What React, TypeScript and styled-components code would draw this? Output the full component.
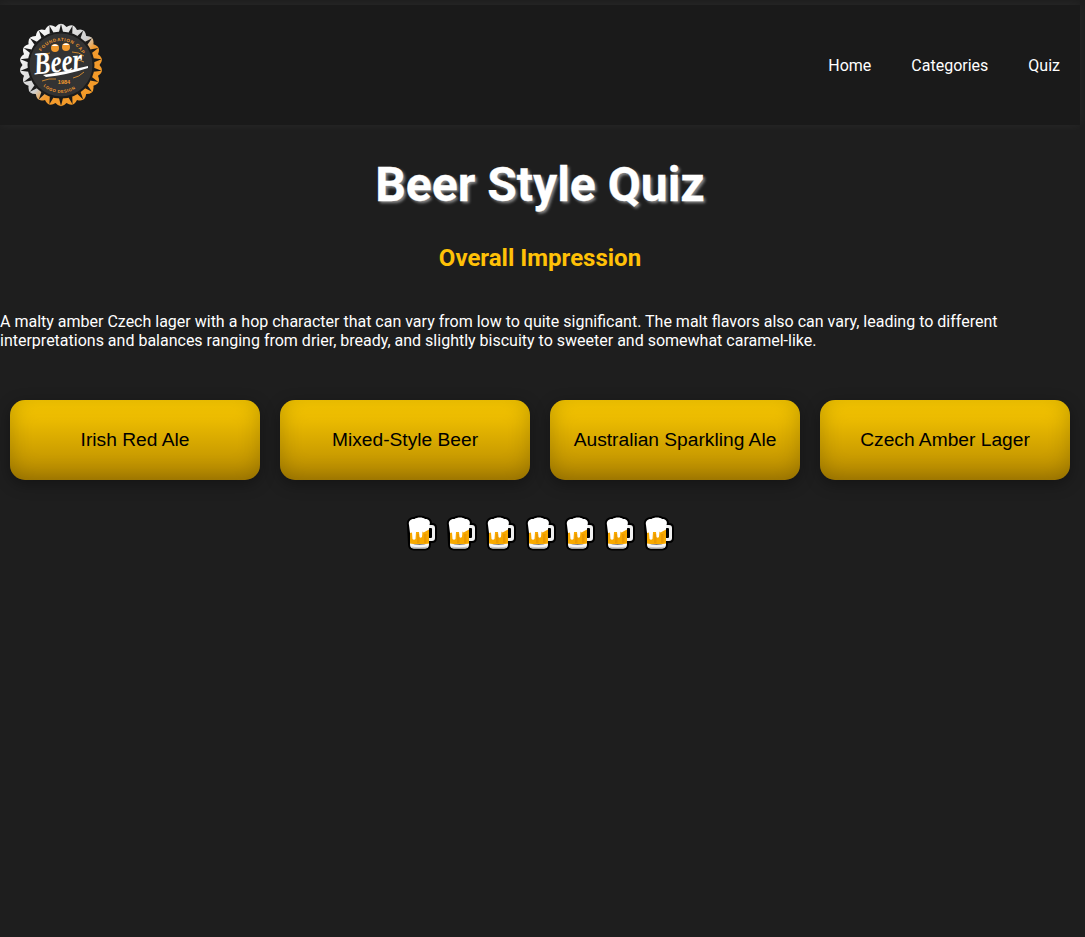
import React from "react";
import styled, { createGlobalStyle } from "styled-components";

const Global = createGlobalStyle`
  html, body { margin: 0; padding: 0; background: #1e1e1e; }
  body { font-family: Roboto, "Liberation Sans", sans-serif; color: #fff; min-height: 937px; }
`;
const Page = styled.div`
  width: 1080px;
  padding-top: 5px;
`;
const Header = styled.header`
  height: 120px;
  box-sizing: border-box;
  background: #1a1a1a;
  box-shadow: 0 0 10px rgba(255, 255, 255, 0.05);
  display: flex;
  align-items: center;
  justify-content: space-between;
  padding: 0 20px 0 19px;
`;
const Nav = styled.nav`
  display: flex;
  gap: 40px;
`;
const NavLink = styled.a`
  color: #fff;
  font-size: 16px;
  line-height: 19px;
  text-decoration: none;
`;
const Main = styled.main`
  text-align: center;
`;
const Title = styled.h1`
  margin: 32px 0 0;
  font-size: 48px;
  line-height: 56px;
  font-weight: 700;
  color: #fff;
  -webkit-text-stroke: 0.3px #fff;
  text-shadow: 2px 2px 3px #8a8a8a;
`;
const Subtitle = styled.h2`
  margin: 31px 0 0;
  font-size: 24px;
  line-height: 28px;
  font-weight: 700;
  color: #ffc107;
`;
const Description = styled.p`
  margin: 40px 0 0;
  font-size: 16px;
  line-height: 19px;
  text-align: left;
  width: 1085px;
`;
const Options = styled.div`
  margin-top: 50px;
  display: flex;
  justify-content: center;
  gap: 20px;
`;
const Option = styled.button`
  width: 250px;
  height: 80px;
  border: 0;
  padding: 0;
  border-radius: 15px;
  font-family: "Liberation Sans", Arial, sans-serif;
  font-size: 19.2px;
  color: #000;
  background: linear-gradient(180deg, #fccb00 0%, #b58800 100%);
  box-shadow: 0 4px 15px rgba(0, 0, 0, 0.35), inset 0 -3px 22px rgba(0, 0, 0, 0.22);
`;
const Mugs = styled.div`
  margin-top: 35px;
  display: flex;
  justify-content: center;
  gap: 4.5px;
`;
const MugIcon = styled.svg`
  width: 35px;
  height: 37px;
  display: block;
`;

const foam =
  "M7 13 C6 9 9 6.5 12.5 7 C15 5 21 5 23 7 C26 6.5 29 9 27.5 13 L27 17.5 L21.5 20.5 L20.5 19.5 L20 25 Q18.5 26.5 17.5 25 L17 20 L14 20 L13.5 27 Q12 28.5 10.5 27 L10 20.5 L8 21 Z";

const Mug = () => (
  <MugIcon viewBox="2 3 35 37" aria-hidden="true">
    <g stroke="#000" strokeWidth="4" strokeLinejoin="round" fill="#000">
      <path d="M7 13 C6 9 9 6.5 12.5 7 C15 5 21 5 23 7 C26 6.5 29 9 27.5 13 L27 32 Q27 36.5 23 36.5 L12 36.5 Q8 36.5 8 32 Z" />
      <path d="M27 13 h3 q3 0 3 3 v10 q0 3 -3 3 h-3 Z" />
    </g>
    <path d="M27 13 h3 q3 0 3 3 v10 q0 3 -3 3 h-3 v-3 h2 q1 0 1 -1 v-8 q0 -1 -1 -1 h-2 Z" fill="#f0f0f0" />
    <path d="M8 15 h19 v17 h-19 Z" fill="#f7a900" />
    <path d="M15 22 h2.5 v9 h-2.5 Z M22 22 h2.5 v9 h-2.5 Z" fill="#ec9a00" />
    <path d="M8 31.5 Q17.5 33.5 27 31.5 v1 q0 4 -4 4 h-11 q-4 0 -4 -4 Z" fill="#f4f4f4" />
    <path d="M9 34.5 Q17.5 36 26 34.5 Q25 36.5 23 36.5 h-11 Q10 36.5 9 34.5 Z" fill="#c4c4c4" />
    <path d={foam} fill="#fff" />
  </MugIcon>
);

const scallopPath = (() => {
  const n = 22;
  const cx = 42;
  const cy = 42;
  let d = "";
  for (let i = 0; i < n; i++) {
    const a0 = (i / n) * Math.PI * 2;
    const a1 = ((i + 0.5) / n) * Math.PI * 2;
    const a2 = ((i + 1) / n) * Math.PI * 2;
    const p = (r: number, a: number) => `${(cx + r * Math.cos(a)).toFixed(2)} ${(cy + r * Math.sin(a)).toFixed(2)}`;
    d += `${i === 0 ? "M" : "L"}${p(38.5, a0)} Q${p(44.5, a1)} ${p(38.5, a2)} `;
  }
  return d + "Z";
})();

const crimps = Array.from({ length: 22 }, (_, i) => (i * 360) / 22);

const Logo = () => (
  <svg width="84" height="84" viewBox="0 0 84 84" aria-label="Beer logo">
    <defs>
      <linearGradient id="capRim" x1="0.1" y1="0.1" x2="0.9" y2="0.9">
        <stop offset="0" stopColor="#ffffff" />
        <stop offset="0.5" stopColor="#cfcfcf" />
        <stop offset="0.62" stopColor="#f29a2e" />
        <stop offset="1" stopColor="#f59b26" />
      </linearGradient>
    </defs>
    <path d={scallopPath} fill="url(#capRim)" />
    {crimps.map((a) => (
      <path key={a} d="M42 1 L40 9 L44 9 Z" fill="#1a1a1a" transform={`rotate(${a} 42 42)`} />
    ))}
    <circle cx="42" cy="42" r="33.5" fill="#1c1c1c" />
    <circle cx="42" cy="42" r="31.5" fill="#333" />
    <g transform="rotate(4 42 42)">
      <path id="logoTop" d="M18 42 A24 24 0 0 1 66 42" fill="none" />
      <text fontFamily="Liberation Sans, sans-serif" fontSize="4.6" fontWeight="700" fill="#f29a2e" letterSpacing="0.6">
        <textPath href="#logoTop" startOffset="50%" textAnchor="middle">FOUNDATION CAP</textPath>
      </text>
      <path id="logoBottom" d="M16 44 A26 26 0 0 0 68 44" fill="none" />
      <text fontFamily="Liberation Sans, sans-serif" fontSize="4.2" fontWeight="700" fill="#f29a2e" letterSpacing="0.5">
        <textPath href="#logoBottom" startOffset="50%" textAnchor="middle">LOGO DESIGN</textPath>
      </text>
    </g>
    <circle cx="36" cy="25" r="4" fill="#f29a2e" />
    <path d="M32.5 23 q3.500 -3.500 7 0 Z" fill="#fff" />
    <circle cx="47" cy="24" r="4" fill="#f29a2e" />
    <path d="M43.500 22 q3.500 -3.500 7 0 Z" fill="#fff" />
    <path d="M20 34 Q26 30 31 30 M53 29 Q60 29 65 33 M20 40 Q24 38 28 38 M23 58 Q30 55 37 56 M54 55 Q60 54 65 49 M58 37 Q61 37 65 39" stroke="#f29a2e" strokeWidth="0.8" fill="none" />
    <text x="0" y="0" textAnchor="middle" transform="translate(40 49) rotate(-6) scale(1 1.25)" fontFamily="Liberation Serif, serif" fontStyle="italic" fontWeight="700" fontSize="25" fill="#fff">Beer</text>
    <path d="M24 52 Q46 49 69 43 L69 45 Q48 52 27 54 Z" fill="#fff" />
    <text x="45" y="60.500" textAnchor="middle" fontFamily="Liberation Sans, sans-serif" fontWeight="700" fontSize="5.6" fill="#f29a2e">1984</text>
  </svg>
);

const options = ["Irish Red Ale", "Mixed-Style Beer", "Australian Sparkling Ale", "Czech Amber Lager"];

export default function App() {
  return (
    <Page>
      <Global />
      <Header>
        <Logo />
        <Nav>
          <NavLink>Home</NavLink>
          <NavLink>Categories</NavLink>
          <NavLink>Quiz</NavLink>
        </Nav>
      </Header>
      <Main>
        <Title>Beer Style Quiz</Title>
        <Subtitle>Overall Impression</Subtitle>
        <Description>
          A malty amber Czech lager with a hop character that can vary from low to quite significant. The malt flavors also can vary, leading to different interpretations and balances ranging from drier, bready, and slightly biscuity to sweeter and somewhat caramel-like.
        </Description>
        <Options>
          {options.map((o) => (
            <Option key={o}>{o}</Option>
          ))}
        </Options>
        <Mugs>
          {Array.from({ length: 7 }, (_, i) => (
            <Mug key={i} />
          ))}
        </Mugs>
      </Main>
    </Page>
  );
}
